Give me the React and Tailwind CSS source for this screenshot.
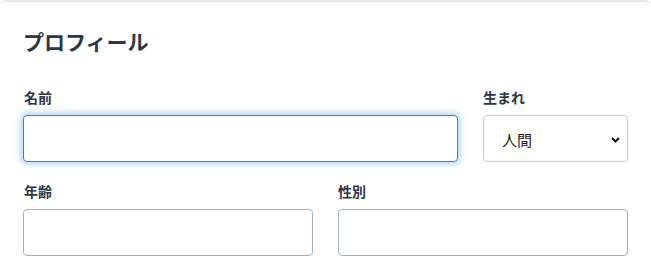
export default function App() {
  const font = { fontFamily: '"Noto Sans CJK JP", "Noto Sans", sans-serif' }
  return (
    <div className="w-[651px] h-[280px] bg-white overflow-hidden" style={font}>
      <div className="w-[651px] h-[300px] rounded-t-md border-t-2 border-[#e2e8f0] bg-white px-[23px] pt-[23px]">
        <h1 className="text-[21px] font-bold leading-[32px] text-[#2d3748]">プロフィール</h1>
        <div className="mt-[30px] flex gap-[25px]">
          <div className="flex-1">
            <label className="block text-[14px] font-bold leading-[20px] text-[#2d3748] pl-px">名前</label>
            <input
              type="text"
              className="mt-[8px] block h-[47px] w-full rounded-[4px] border border-[#3b7dd8] bg-white px-3 shadow-[0_0_6px_2px_rgba(66,153,225,0.45)] outline-none"
            />
          </div>
          <div className="w-[145px]">
            <label className="block text-[14px] font-bold leading-[20px] text-[#2d3748]">生まれ</label>
            <div className="relative mt-[8px] h-[47px] w-full rounded-[4px] border border-[#cbcbcb] bg-white">
              <span className="absolute left-[18px] top-[13px] text-[15px] leading-[22px] text-[#1a1a1a]">人間</span>
              <svg className="absolute right-[7px] top-[21px]" width="9" height="6" viewBox="0 0 9 6">
                <path d="M1 1l3.5 3.5L8 1" fill="none" stroke="#111" strokeWidth="2" />
              </svg>
            </div>
          </div>
        </div>
        <div className="mt-[19px] grid grid-cols-2 gap-[25px]">
          <div>
            <label className="block text-[14px] font-bold leading-[20px] text-[#2d3748] pl-px">年齢</label>
            <input
              type="text"
              className="mt-[8px] block h-[47px] w-full rounded-[4px] border border-[#a0aec0] bg-white px-3 outline-none"
            />
          </div>
          <div>
            <label className="block text-[14px] font-bold leading-[20px] text-[#2d3748]">性別</label>
            <input
              type="text"
              className="mt-[8px] block h-[47px] w-full rounded-[4px] border border-[#a0aec0] bg-white px-3 outline-none"
            />
          </div>
        </div>
      </div>
    </div>
  )
}
